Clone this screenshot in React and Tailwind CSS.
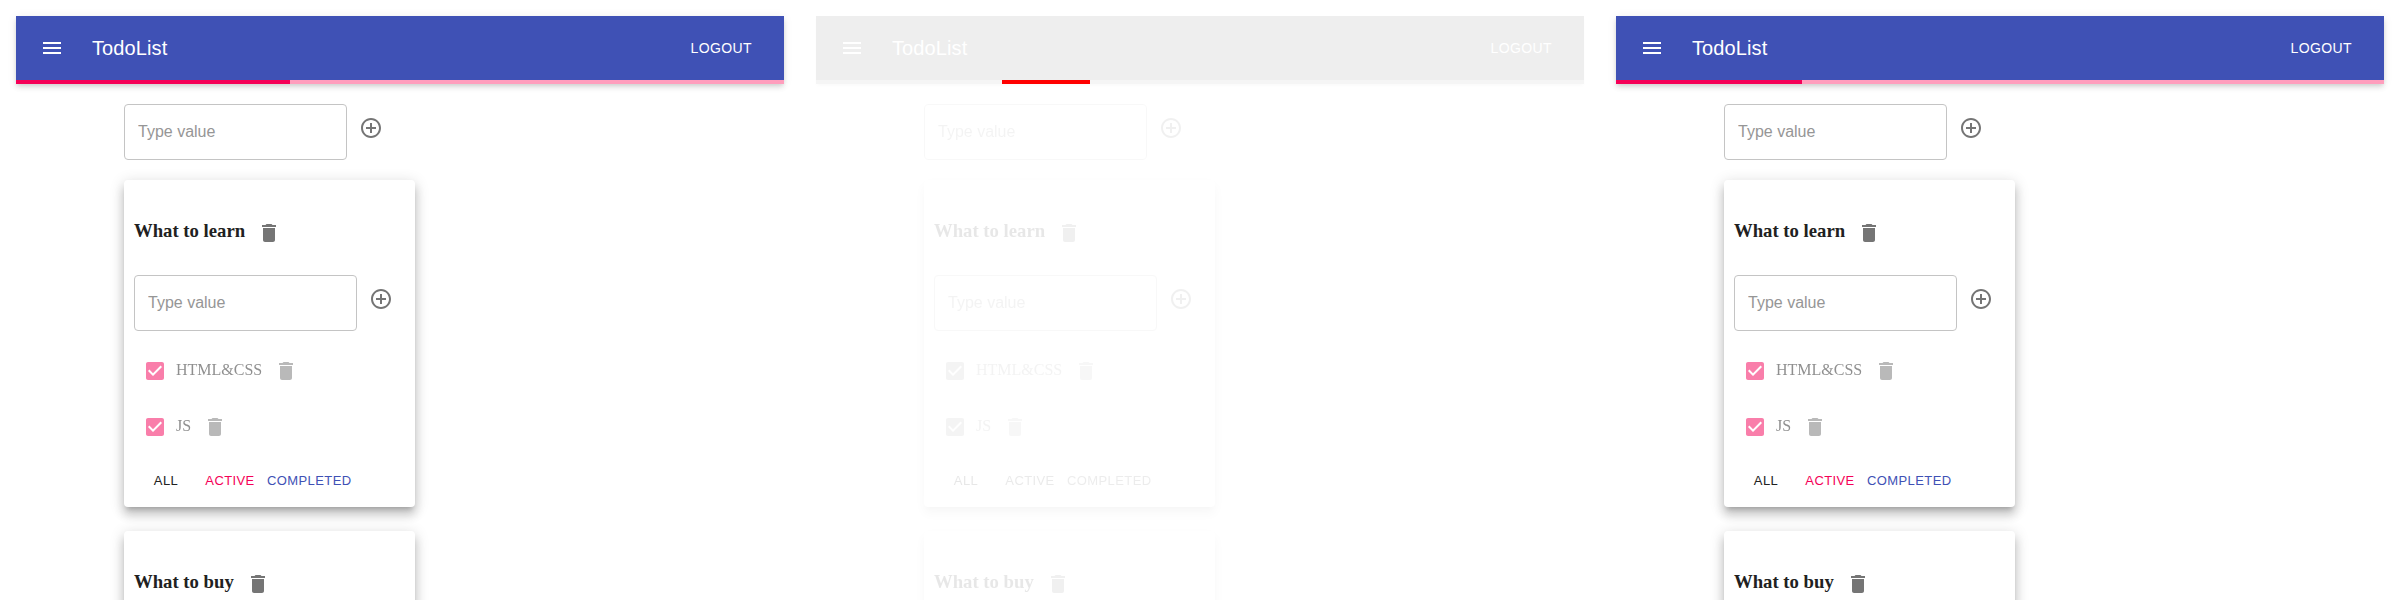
const deletePath = "M6 19c0 1.1.9 2 2 2h8c1.1 0 2-.9 2-2V7H6v12zM19 4h-3.5l-1-1h-5l-1 1H5v2h14V4z";
const addPath = "M13 7h-2v4H7v2h4v4h2v-4h4v-2h-4V7zm-1-5C6.48 2 2 6.48 2 12s4.48 10 10 10 10-4.48 10-10S17.52 2 12 2zm0 18c-4.41 0-8-3.59-8-8s3.59-8 8-8 8 3.59 8 8-3.59 8-8 8z";
const menuPath = "M3 18h18v-2H3v2zm0-5h18v-2H3v2zm0-7v2h18V6H3z";
const checkPath = "M19 3H5c-1.11 0-2 .9-2 2v14c0 1.1.89 2 2 2h14c1.11 0 2-.9 2-2V5c0-1.1-.89-2-2-2zm-9 14l-5-5 1.41-1.41L10 14.17l7.59-7.59L19 8l-9 9z";

const cardShadow = "shadow-[0_5px_5px_-3px_rgba(0,0,0,0.2),0_8px_10px_1px_rgba(0,0,0,0.14),0_3px_14px_2px_rgba(0,0,0,0.12)]";

function Icon({ d, className }) {
  return (
    <svg viewBox="0 0 24 24" className={"w-6 h-6 fill-current " + className}>
      <path d={d} />
    </svg>
  );
}

function IconButton({ d, color = "text-[#757575]" }) {
  return (
    <button className="p-3 shrink-0">
      <Icon d={d} className={color} />
    </button>
  );
}

function AddForm() {
  return (
    <div className="flex items-start">
      <input
        placeholder="Type value"
        className="w-[223px] h-14 px-[13px] border border-[#c4c4c4] rounded text-base text-[#212121] placeholder:text-[#969696] placeholder:opacity-100 outline-none"
      />
      <IconButton d={addPath} />
    </div>
  );
}

function Task({ title }) {
  return (
    <div className="flex items-center h-12 mb-2 opacity-50">
      <div className="p-[9px]">
        <Icon d={checkPath} className="text-[#f50057]" />
      </div>
      <span className="font-['Liberation_Serif',serif] text-base text-[#212121] -mt-0.5">{title}</span>
      <IconButton d={deletePath} />
    </div>
  );
}

function CardTitle({ title }) {
  return (
    <div className="flex items-center h-12 mb-[18px]">
      <h3 className="font-['Liberation_Serif',serif] font-bold text-[18.72px] text-[#212121] -mt-1">{title}</h3>
      <IconButton d={deletePath} />
    </div>
  );
}

function TodoCard({ title, tasks }) {
  return (
    <div className={"w-[291px] bg-white rounded pt-[29px] px-[10px] pb-[11px] mt-5 " + cardShadow}>
      <CardTitle title={title} />
      <AddForm />
      <div className="mt-4">
        {tasks.map((t) => (
          <Task key={t} title={t} />
        ))}
      </div>
      <div className="flex mt-[14px] text-[13px] tracking-[0.4px] leading-[23px]">
        <button className="w-16 py-1 text-center text-[#212121]">ALL</button>
        <button className="w-16 py-1 text-center text-[#f50057]">ACTIVE</button>
        <button className="px-[5px] py-1 text-center text-[#3f51b5]">COMPLETED</button>
      </div>
    </div>
  );
}

function Panel({ faded, barClass }) {
  return (
    <div className="w-[768px] shrink-0">
      <header className={faded ? "bg-[#eeeeee] shadow-[0_2px_4px_-1px_rgba(0,0,0,0.03)]" : "bg-[#3f51b5] shadow-[0_2px_4px_-1px_rgba(0,0,0,0.1),0_4px_5px_0_rgba(0,0,0,0.07),0_1px_10px_0_rgba(0,0,0,0.07)]"}>
        <div className="flex items-center h-16 pl-3 pr-8 text-white">
          <IconButton d={menuPath} color="text-white" />
          <h1 className="ml-4 text-xl tracking-[0.1px]">TodoList</h1>
          <button className="ml-auto text-sm tracking-[0.4px]">LOGOUT</button>
        </div>
        <div className={faded ? "h-1 bg-[#f5f5f5]" : "h-1 bg-[#ff9ebd]"}>
          <div className={"h-1 " + barClass} />
        </div>
      </header>
      <div className={faded ? "ml-[108px] mt-5 opacity-10 grayscale blur-[0.4px]" : "ml-[108px] mt-5"}>
        <AddForm />
        <TodoCard title="What to learn" tasks={["HTML&CSS", "JS"]} />
        {/* only the title of the second card fits in the frame */}
        <div className={"w-[291px] bg-white rounded pt-[29px] px-[10px] pb-[11px] mt-6 " + cardShadow}>
          <CardTitle title="What to buy" />
        </div>
      </div>
    </div>
  );
}

export default function App() {
  return (
    <div className="flex gap-8 p-4 h-[600px] overflow-hidden bg-white font-['Liberation_Sans',sans-serif]">
      <Panel barClass="w-[274px] bg-[#f50057]" />
      <Panel faded barClass="ml-[186px] w-[88px] bg-[#ff0000]" />
      <Panel barClass="w-[186px] bg-[#f50057]" />
    </div>
  );
}
